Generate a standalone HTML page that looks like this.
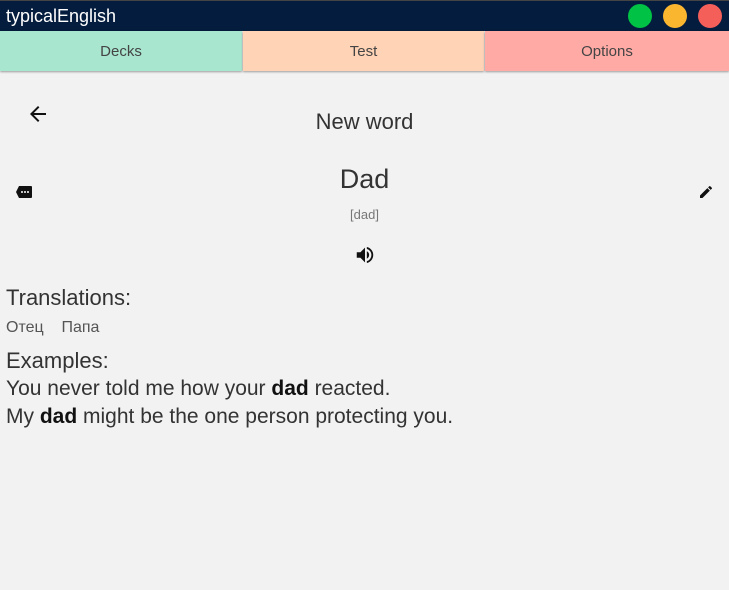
<!DOCTYPE html>
<html><head><style>
body{margin:0;width:729px;height:590px;background:#f2f2f2;font-family:"Liberation Sans",sans-serif;position:relative;overflow:hidden;color:#222}
.t{position:absolute;white-space:nowrap}
.bar{position:absolute;left:0;top:0;width:729px;height:31px;background:#041c3d;border-top:1px solid #444;box-sizing:border-box}
.dot{position:absolute;top:4px;width:24px;height:24px;border-radius:50%}
.tab{position:absolute;top:31px;height:40px;line-height:42px;text-align:center;font-size:15px;color:#444;box-shadow:0 1px 2px rgba(0,0,0,.35)}
</style></head><body>
<div class="bar"></div>
<div class="t" style="left:6px;top:6px;font-size:18px;color:#fff">typicalEnglish</div>
<div class="dot" style="left:628px;background:#00c244"></div>
<div class="dot" style="left:663px;background:#fbb630"></div>
<div class="dot" style="left:698px;background:#f45f5a"></div>
<div class="tab" style="left:0;width:242px;background:#a8e6d0">Decks</div>
<div class="tab" style="left:243px;width:241px;background:#ffd3b6">Test</div>
<div class="tab" style="left:485px;width:244px;background:#ffaaa5">Options</div>
<svg class="t" style="left:26px;top:102px" width="24" height="24" viewBox="0 0 24 24"><path d="M20 11H7.8l5.6-5.6L12 4l-8 8 8 8 1.4-1.4L7.8 13H20z" fill="#111"/></svg>
<div class="t" style="left:0;width:729px;text-align:center;top:109px;font-size:22px;color:#333">New word</div>
<svg class="t" style="left:15px;top:185px" width="18" height="14" viewBox="0 0 18 14"><path d="M4 1h12a1 1 0 0 1 1 1v10a1 1 0 0 1-1 1H4L1 7z" fill="#111"/><circle cx="7" cy="7" r="1" fill="#fff"/><circle cx="10" cy="7" r="1" fill="#fff"/><circle cx="13" cy="7" r="1" fill="#fff"/></svg>
<div class="t" style="left:0;width:729px;text-align:center;top:164px;font-size:27px;color:#333">Dad</div>
<svg class="t" style="left:698px;top:184px" width="16" height="16" viewBox="0 0 24 24"><path d="M3 17.25V21h3.75L17.81 9.94l-3.750-3.75zM20.71 7.04a1 1 0 0 0 0-1.41l-2.34-2.34a1 1 0 0 0-1.41 0l-1.83 1.83 3.75 3.75z" fill="#111"/></svg>
<div class="t" style="left:0;width:729px;text-align:center;top:207px;font-size:13px;color:#777">[dad]</div>
<svg class="t" style="left:354px;top:244px" width="22" height="22" viewBox="0 0 24 24"><path d="M3 9v6h4l5 5V4L7 9zm13.5 3A4.5 4.5 0 0 0 14 7.97v8.05A4.5 4.5 0 0 0 16.5 12zM14 3.23v2.06a7 7 0 0 1 0 13.42v2.06A9 9 0 0 0 14 3.23z" fill="#111"/></svg>
<div class="t" style="left:6px;top:285px;font-size:22px;color:#333">Translations:</div>
<div class="t" style="left:6px;top:319px;font-size:16px;color:#555">Отец&nbsp;&nbsp;&nbsp; Папа</div>
<div class="t" style="left:6px;top:348px;font-size:22px;color:#333">Examples:</div>
<div class="t" style="left:6px;top:377px;font-size:21px;color:#333">You never told me how your <b style="color:#111">dad</b> reacted.</div>
<div class="t" style="left:6px;top:405px;font-size:21px;color:#333">My <b style="color:#111">dad</b> might be the one person protecting you.</div>
</body></html>
